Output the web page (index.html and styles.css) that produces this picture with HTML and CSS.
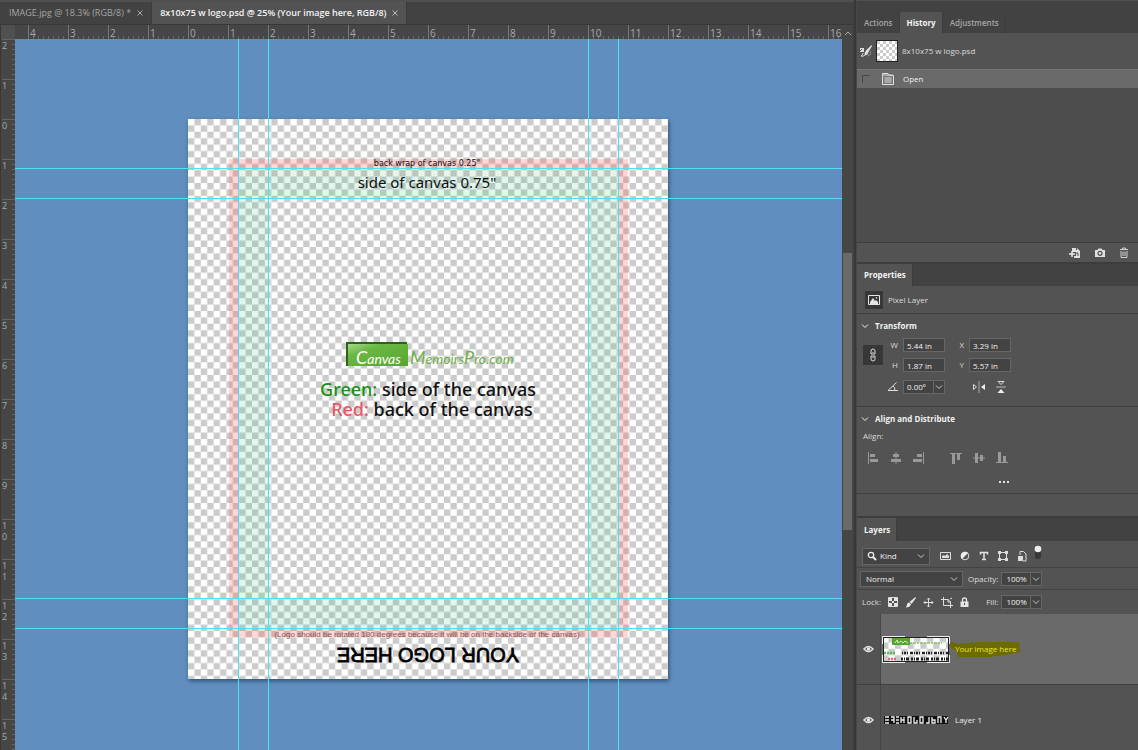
FILE: index.html
```html
<!DOCTYPE html>
<html lang="en">
<head>
<meta charset="utf-8">
<title>8x10x75 w logo.psd</title>
<link rel="stylesheet" href="styles.css">
</head>
<body>
<svg class="defs" aria-hidden="true">
  <symbol id="chev" viewBox="0 0 8 8"><path d="M1 2.500L4 5.500L7 2.500" fill="none" stroke="currentColor"/></symbol>
  <symbol id="eye" viewBox="0 0 12 8"><path d="M1 4Q6-1.500 11 4Q6 9.500 1 4Z" fill="none" stroke="currentColor" stroke-width="1.500"/><circle cx="6" cy="4" r="2" fill="currentColor"/></symbol>
</svg>
<div class="app">
  <main class="workspace">
    <nav class="doc-tabs">
      <button class="doc-tab">IMAGE.jpg @ 18.3% (RGB/8) * <svg class="close" width="6" height="6" viewBox="0 0 6 6"><path d="M.5.5L5.500 5.500M5.500.5L.5 5.500" stroke="#aaa"/></svg></button>
      <button class="doc-tab active">8x10x75 w logo.psd @ 25% (Your image here, RGB/8) <svg class="close" width="6" height="6" viewBox="0 0 6 6"><path d="M.5.5L5.500 5.500M5.500.5L.5 5.500" stroke="#bbb"/></svg></button>
    </nav>
    <div class="view">
      <div class="corner"></div>
      <div class="ruler-x"><span>4</span><span>3</span><span>2</span><span>1</span><span>0</span><span>1</span><span>2</span><span>3</span><span>4</span><span>5</span><span>6</span><span>7</span><span>8</span><span>9</span><span>10</span><span>11</span><span>12</span><span>13</span><span>14</span><span>15</span><span>16</span></div>
      <div class="ruler-y"><span>2</span><span>1</span><span>0</span><span>1</span><span>2</span><span>3</span><span>4</span><span>5</span><span>6</span><span>7</span><span>8</span><span>9</span><span>1<br>0</span><span>1<br>1</span><span>1<br>2</span><span>1<br>3</span><span>1<br>4</span><span>1<br>5</span></div>
      <div class="stage">
        <svg class="artboard" viewBox="0 0 480 560">
          <defs>
            <pattern id="checks" width="16" height="16" patternUnits="userSpaceOnUse" patternTransform="scale(.8)">
              <path d="M0 0H16V16H0Z" fill="#fff"/><path d="M8 0h8v8H8zM0 8h8v8H0z" fill="#cbcbcb"/>
            </pattern>
            <linearGradient id="leaf" x1="0" y1="0" x2="1" y2="1"><stop offset="0" stop-color="#a9d98a"/><stop offset=".3" stop-color="#6ab741"/><stop offset="1" stop-color="#58a632"/></linearGradient>
          </defs>
          <path d="M0 0H480V560H0Z" fill="url(#checks)"/>
          <path d="M41 40H440V518H41ZM50 49V510H431V49Z" fill="#ff4848" fill-opacity=".22" fill-rule="evenodd"/>
          <path d="M50 49H431V510H50ZM80 79V479H400V79Z" fill="#3cbe82" fill-opacity=".14" fill-rule="evenodd"/>
          <text class="wrap-note" x="239" y="47">back wrap of canvas 0.25"</text>
          <text class="side-note" x="239" y="69">side of canvas 0.75"</text>
          <path d="M158 223H219V226H161V247H158Z" fill="#2c6317"/>
          <path d="M160 225H220V247H160Z" fill="url(#leaf)"/>
          <text class="brand" x="168" y="245"><tspan class="brand-cap">C</tspan>anvas</text>
          <text class="brand" x="222" y="245"><tspan class="brand-cap">M</tspan>emoirs<tspan class="brand-cap">P</tspan>ro.com</text>
          <text class="legend" x="240" y="277"><tspan>Green:</tspan> side of the canvas</text>
          <text class="legend" x="244" y="297"><tspan>Red:</tspan> back of the canvas</text>
          <text class="rotate-note" x="239" y="518">(Logo should be rotated 180 degrees because it will be on the backside of the canvas)</text>
          <text class="your-logo" x="-240" y="-529" transform="rotate(180)">YOUR LOGO HERE</text>
        </svg>
        <i class="guide v g1"></i><i class="guide v g2"></i><i class="guide v g3"></i><i class="guide v g4"></i>
        <i class="guide h g5"></i><i class="guide h g6"></i><i class="guide h g7"></i><i class="guide h g8"></i>
      </div>
      <div class="scroll">
        <svg width="8" height="6" viewBox="0 0 8 6"><path d="M1 5L4 2L7 5" fill="none" stroke="#aaa"/></svg>
        <div class="thumb"></div>
      </div>
    </div>
  </main>

  <aside class="panels">
    <section class="history">
      <nav class="tabs first"><button>Actions</button><button class="on">History</button><button>Adjustments</button></nav>
      <div class="snapshot">
        <svg width="12" height="12" viewBox="0 0 12 12"><path d="M11.500 0L6 5.500L4.500 8.500L5 10.500L7.500 9.500L8.500 7L12 1Z" fill="#e0e0e0"/><path d="M0 3H4V7H0Z" fill="#ddd"/><path d="M0 6L2 4" stroke="#535353"/><path d="M5 10Q3 12 1 11Q3 10 3 8" fill="none" stroke="#ddd"/><path d="M8 11L10 10L11 6" fill="none" stroke="#ccc" stroke-dasharray="1 1"/></svg>
        <div class="snap-img"></div><span>8x10x75 w logo.psd</span>
      </div>
      <div class="state"><i class="brush-slot"></i>
        <svg width="12" height="12" viewBox="0 0 12 12"><path d="M.5 2.500V.5H6L7 2.500H11.500V11.500H.5Z" fill="#777" stroke="#ddd"/><path d="M1 2H11M2.500 5H9.500M2.500 7H9.500M2.500 9H9.500" stroke="#ddd"/></svg>
        <span>Open</span></div>
      <div class="history-empty"></div>
      <footer class="history-tools">
        <button aria-label="New document from state"><svg width="12" height="12" viewBox="0 0 12 12"><path d="M3 1H7V3H8V1L11 4V11H5V9H7V5H3Z" fill="#e0e0e0"/><path d="M0 7H6M3 4V10" stroke="#eee" stroke-width="1.500"/><path d="M7 6H9V9" fill="none" stroke="#555"/></svg></button>
        <button aria-label="New snapshot"><svg width="12" height="12" viewBox="0 0 12 12"><path d="M1 3H3.500L4.500 1.500H7.500L8.500 3H11V10H1Z" fill="#e0e0e0"/><circle cx="6" cy="6.300" r="2" fill="#e0e0e0" stroke="#4d4d4d" stroke-width="1.200"/></svg></button>
        <button aria-label="Delete"><svg width="10" height="12" viewBox="0 0 10 12"><path d="M1 2.500H9M3.500 2V1H6.500V2M2 4V10.500H8V4M4 4.500V9M6 4.500V9" fill="none" stroke="#d0d0d0"/></svg></button>
      </footer>
    </section>

    <section class="properties">
      <nav class="tabs"><button class="on">Properties</button></nav>
      <div class="kind-row"><span class="sq"><svg width="12" height="10" viewBox="0 0 12 10"><path d="M.5.5H11.500V9.500H.5Z" fill="none" stroke="#e5e5e5"/><path d="M2 9V7L5 3L7 6L8 5L10 7V9Z" fill="#e5e5e5"/><circle cx="8.500" cy="3" r=".8" fill="#e5e5e5"/></svg></span>Pixel Layer</div>
      <h2><svg width="8" height="8"><use href="#chev"/></svg>Transform</h2>
      <div class="transform">
        <button class="link" aria-label="Link width and height"><svg width="8" height="14" viewBox="0 0 8 14"><path d="M2 6V3Q2 1 4 1Q6 1 6 3V6M2 8V11Q2 13 4 13Q6 13 6 11V8M4 4V10M2 6H3M6 6H5M2 8H3M6 8H5" fill="none" stroke="#ddd"/></svg></button>
        <label for="w">W</label><input id="w" value="5.44 in"><label for="x">X</label><input id="x" value="3.29 in">
        <label for="h">H</label><input id="h" value="1.87 in"><label for="y">Y</label><input id="y" value="5.57 in">
        <label for="a" class="angle" aria-label="Angle"><svg width="12" height="9" viewBox="0 0 12 9"><path d="M9.500.500L1 8.500H11M6 4Q8 5 8 8.500" fill="none" stroke="#ddd"/></svg></label>
        <div class="combo"><input id="a" value="0.00º"><button aria-label="Angle presets"><svg width="8" height="8"><use href="#chev"/></svg></button></div>
        <div class="flips">
          <button aria-label="Flip horizontal"><svg width="14" height="12" viewBox="0 0 14 12"><path d="M1.500 3.500L4.500 6L1.500 8.500Z" fill="none" stroke="#ddd"/><path d="M7 0V12" stroke="#aaa"/><path d="M13 3V9L9 6Z" fill="#eee"/></svg></button>
          <button aria-label="Flip vertical"><svg width="12" height="14" viewBox="0 0 12 14"><path d="M3 1.500H9L6 4.500Z" fill="none" stroke="#ddd"/><path d="M1 7H11" stroke="#bbb"/><path d="M2.500 13H9.500L6 9Z" fill="#eee"/></svg></button>
        </div>
      </div>
      <div class="align">
        <h2><svg width="8" height="8"><use href="#chev"/></svg>Align and Distribute</h2>
        <p>Align:</p>
        <div class="align-icons">
          <button aria-label="Align left edges"><svg width="12" height="12" viewBox="0 0 12 12"><path d="M1.500 0V12" stroke="#999"/><path d="M3 2H8V5H3ZM3 7H11V10H3Z"/></svg></button>
          <button aria-label="Align horizontal centers"><svg width="12" height="12" viewBox="0 0 12 12"><path d="M6 0V12" stroke="#999"/><path d="M3 2H9V5H3ZM1 7H11V10H1Z"/></svg></button>
          <button aria-label="Align right edges"><svg width="12" height="12" viewBox="0 0 12 12"><path d="M10.500 0V12" stroke="#999"/><path d="M4 2H9V5H4ZM0 7H9V10H0Z"/></svg></button>
          <i></i>
          <button aria-label="Align top edges"><svg width="12" height="12" viewBox="0 0 12 12"><path d="M0 1.500H12" stroke="#999"/><path d="M2 2H5V12H2ZM7 2H10V8H7Z"/></svg></button>
          <button aria-label="Align vertical centers"><svg width="12" height="12" viewBox="0 0 12 12"><path d="M0 6H12" stroke="#999"/><path d="M2 1H5V11H2ZM7 3H10V9H7Z"/></svg></button>
          <button aria-label="Align bottom edges"><svg width="12" height="12" viewBox="0 0 12 12"><path d="M0 10.500H12" stroke="#999"/><path d="M2 0H5V10H2ZM7 4H10V10H7Z"/></svg></button>
        </div>
        <button class="more" aria-label="More options"><svg width="12" height="4" viewBox="0 0 12 4"><path d="M1 1H3V3H1ZM5 1H7V3H5ZM9 1H11V3H9Z" fill="#e5e5e5"/></svg></button>
      </div>
    </section>

    <section class="layers">
      <nav class="tabs"><button class="on">Layers</button></nav>
      <div class="filter">
        <div class="drop kind"><svg width="10" height="10" viewBox="0 0 10 10"><circle cx="4" cy="4" r="2.700" fill="none" stroke="#eee" stroke-width="1.300"/><path d="M6 6L9 9" stroke="#eee" stroke-width="2"/></svg><select aria-label="Filter type"><option>Kind</option></select><svg class="arr" width="8" height="8"><use href="#chev"/></svg></div>
        <button aria-label="Pixel layers"><svg width="11" height="10" viewBox="0 0 11 10"><path d="M.5 1.500H10.500V8.500H.5Z" fill="none" stroke="#ddd"/><path d="M2 7V5L4 4L5 5L7 3L9 5V7Z" fill="#ddd"/></svg></button>
        <button aria-label="Adjustment layers"><svg width="10" height="10" viewBox="0 0 10 10"><circle cx="5" cy="5" r="3.800" fill="none" stroke="#ddd"/><path d="M8 2A4.200 4.200 0 0 0 2 8Z" fill="#eee"/></svg></button>
        <button aria-label="Type layers"><svg width="10" height="10" viewBox="0 0 10 10"><path d="M1.500 3.500V1.500H8.500V3.500M5 1.500V8.500M3 8.500H7" fill="none" stroke="#e5e5e5" stroke-width="1.500"/></svg></button>
        <button aria-label="Shape layers"><svg width="10" height="10" viewBox="0 0 10 10"><path d="M1.500 1.500H8.500V8.500H1.500Z" fill="none" stroke="#ddd"/><path d="M0 0H3V3H0ZM7 0H10V3H7ZM0 7H3V10H0ZM7 7H10V10H7Z" fill="#ddd"/></svg></button>
        <button aria-label="Smart objects"><svg width="10" height="11" viewBox="0 0 10 11"><path d="M3 4V.5H6.500L9 3V10H6" fill="none" stroke="#ddd"/><path d="M1 5H6V10H1Z" fill="#ddd"/></svg></button>
        <button class="toggle" aria-label="Filtering on or off"><svg width="8" height="15" viewBox="0 0 8 15"><rect x="1" y="3" width="6" height="11" rx="2" fill="#383838"/><circle cx="4" cy="4" r="3.300" fill="#eee"/></svg></button>
      </div>
      <div class="blend">
        <div class="drop mode"><select aria-label="Blend mode"><option>Normal</option></select><svg class="arr" width="8" height="8"><use href="#chev"/></svg></div>
        <label for="op">Opacity:</label><div class="combo"><input id="op" value="100%"><button aria-label="Opacity slider"><svg width="8" height="8"><use href="#chev"/></svg></button></div>
      </div>
      <div class="lock"><span>Lock:</span>
        <button aria-label="Lock transparency"><svg width="10" height="10" viewBox="0 0 10 10"><path d="M.5.5H9.500V9.500H.5Z" fill="none" stroke="#ddd"/><path d="M1 1H4V4H1ZM6 1H9V4H6ZM4 4H6V6H4ZM1 6H4V9H1ZM6 6H9V9H6Z" fill="#e5e5e5"/></svg></button>
        <button aria-label="Lock image pixels"><svg width="11" height="11" viewBox="0 0 11 11"><path d="M10.500 0L4.500 5L6.500 7L11 1Z" fill="#e5e5e5"/><path d="M4 5.500L6 7.500Q5 10.500 .5 10.500Q2 9.500 2 7.500Q2.500 5.500 4 5.500Z" fill="#eee"/></svg></button>
        <button aria-label="Lock position"><svg width="11" height="11" viewBox="0 0 11 11"><path d="M5.500 1V10M1 5.500H10M4 2.500L5.500 1L7 2.500M4 8.500L5.500 10L7 8.500M2.500 4L1 5.500L2.500 7M8.500 4L10 5.500L8.500 7" fill="none" stroke="#ddd"/></svg></button>
        <button aria-label="Lock artboard nesting"><svg width="12" height="11" viewBox="0 0 12 11"><path d="M0 2.500H7L9.500 5V11M2.500 0V8.500H12M7 2V5H10M9 2L11 1" fill="none" stroke="#ddd"/></svg></button>
        <button aria-label="Lock all"><svg width="9" height="11" viewBox="0 0 9 11"><path d="M2.500 5V3Q2.500 1 4.500 1Q6.500 1 6.500 3V5" fill="none" stroke="#e5e5e5" stroke-width="1.300"/><path d="M.5 4.500H8.500V10H.5Z" fill="#e5e5e5"/><path d="M4.500 6V8" stroke="#555"/></svg></button>
        <label for="fill">Fill:</label><div class="combo"><input id="fill" value="100%"><button aria-label="Fill slider"><svg width="8" height="8"><use href="#chev"/></svg></button></div>
      </div>
      <div class="layer selected">
        <button class="vis" aria-label="Toggle visibility"><svg width="11" height="8"><use href="#eye"/></svg></button>
        <div class="layer-body">
          <svg width="68" height="27" viewBox="0 0 68 27"><path d="M1 1H67V26H1Z" fill="#222"/><path d="M2 2H66V25H2Z" fill="url(#checks)"/><path d="M10 2H28V9H10Z" fill="#55a52e"/><path d="M13 7L15 4L16 7L19 5L21 7L23 5L26 7" fill="none" stroke="#d8efc8"/><path d="M28 7H60" stroke="#8cc070" stroke-width="1.500" stroke-dasharray="2 1 3 1"/><path d="M2 17H14" stroke="#58b858" stroke-width="2.500" stroke-dasharray="2 1"/><path d="M20 17H66" stroke="#222" stroke-width="2.500" stroke-dasharray="1 1 2 1 1 2 3 1"/><path d="M6 23H14" stroke="#e06575" stroke-width="2.500" stroke-dasharray="2 1"/><path d="M19 23H66" stroke="#222" stroke-width="3" stroke-dasharray="2 1 1 1 3 2"/><path d="M.5 8V.5H23M45 .5H67.500V8M67.500 19V26.500H45M23 26.500H.5V19" fill="none" stroke="#eee"/></svg>
          <span class="marked"><svg class="marker" viewBox="0 0 74 20" preserveAspectRatio="none"><path d="M0 3Q4 3 8 5L30 3L71 3L72 13L56 16L40 18H8L7 12L1 9Z" fill="#6d6a00"/></svg><span class="label">Your image here</span></span>
        </div>
      </div>
      <div class="layer">
        <button class="vis" aria-label="Toggle visibility"><svg width="11" height="8"><use href="#eye"/></svg></button>
        <div class="layer-body">
          <svg width="68" height="8" viewBox="0 0 68 8"><path d="M2 0H66V8H2Z" fill="#111"/><path d="M3 1H7M3 4H7M3 7H7M9 1H12V7M9 4H12M14 1H17M14 4H17M14 7H17M19 1V7M22 1V7M19 4H22M26 1H29V7H26ZM32 1V7H35V4M38 1H41V7H38ZM44 7H47V1M50 1V7H53V4H50M56 7V1H59V7M62 1L64 4L66 1M64 4V7" fill="none" stroke="#eee" stroke-width="1.300"/></svg>
          <span class="label">Layer 1</span>
        </div>
      </div>
    </section>
  </aside>
</div>
</body>
</html>
```
FILE: styles.css
```css
* { box-sizing: border-box; }
body { margin: 0; background: #535353; color: #dcdcdc; font: 8px/12px "Open Sans", "Noto Sans", sans-serif; }
button, input, select { font: inherit; color: inherit; margin: 0; padding: 0; border: 0; background: none; border-radius: 0; }
button { display: flex; align-items: center; justify-content: center; flex: none; }
svg { display: block; flex: none; }
.defs { position: absolute; width: 0; height: 0; }
.app { display: grid; grid-template-columns: 1fr 282px; height: 100vh; min-height: 750px; overflow: hidden; }
.workspace { display: flex; flex-direction: column; min-width: 0; border-right: 2px solid #383838; }

.doc-tabs { display: flex; height: 25px; background: #424242; border-top: 2px solid #505050; border-bottom: 1px solid #383838; }
.doc-tab { padding: 0 8px; gap: 6px; color: #a5a5a5; font-size: 9px; font-weight: 500; border-right: 1px solid #3b3b3b; }
.doc-tab:first-child { padding-left: 9px; }
.doc-tab.active { background: #535353; color: #f4f4f4; font-weight: 600; }

.view { flex: 1; min-height: 0; display: grid; grid-template: 14px minmax(0, 1fr) / 15px minmax(0, 1fr) 12px; background: #464646; }
.corner { background: #505050; border-left: 1px solid #383838; }
.ruler-x { display: flex; overflow: hidden; padding-left: 13px; color: #a9a9a9; font-size: 10px; line-height: 16px; }
.ruler-x span {
  flex: 0 0 40px; padding-left: 1px; border-left: 1px solid #777;
  background: repeating-linear-gradient(90deg, transparent 0 4px, #696969 4px 5px) 0 100% / 100% 3px no-repeat;
}
.ruler-y { display: flex; flex-direction: column; overflow: hidden; padding-left: 1px; color: #a9a9a9; font-size: 9px; line-height: 11px; border-left: 1px solid #383838; }
.ruler-y span {
  flex: 0 0 40px; border-top: 1px solid #666;
  background: repeating-linear-gradient(180deg, transparent 0 4px, #666 4px 5px) 100% 0 / 3px 100% no-repeat;
}
.stage { position: relative; overflow: hidden; background: #608ebf; }
.artboard { position: absolute; left: 173px; top: 80px; width: 480px; height: 560px; box-shadow: 1px 2px 4px rgba(20, 40, 70, .6); }
.artboard text { text-anchor: middle; font-family: "Noto Sans", sans-serif; fill: #111; }
.artboard .wrap-note { font: 8px "DejaVu Sans", sans-serif; }
.artboard .side-note { font-size: 15px; }
.artboard .legend { font-size: 18px; font-weight: 500; }
.artboard .legend tspan { fill: #159115; }
.artboard .legend + .legend tspan { fill: #ea5568; }
.artboard .brand { font: italic 14px Lato, sans-serif; text-anchor: start; fill: #fff; }
.artboard .brand + .brand { fill: #6fae4c; }
.brand-cap { font-size: 18px; }
.artboard .rotate-note { font: 8px "Liberation Sans", sans-serif; fill: #8d5555; }
.artboard .your-logo { font: 20px "Liberation Sans", sans-serif; fill: #000; stroke: #000; stroke-width: .8; }
.guide { position: absolute; background: #4fe0f2; }
.guide.v { top: 0; bottom: 0; width: 1px; }
.guide.h { left: 0; right: 0; height: 1px; }
.g1 { left: 223px; } .g2 { left: 253px; } .g3 { left: 573px; } .g4 { left: 603px; }
.g5 { top: 129px; } .g6 { top: 159px; } .g7 { top: 559px; } .g8 { top: 589px; }
.scroll { grid-area: 1 / 3 / 3 / 4; display: flex; flex-direction: column; align-items: center; padding-top: 5px; border-right: 1px solid #404040; }
.thumb { width: 9px; height: 277px; margin-top: 217px; background: #6a6a6a; }

.panels { display: flex; flex-direction: column; min-width: 0; border-left: 1px solid #474747; }
.tabs { display: flex; height: 22px; background: #424242; }
.tabs button { padding: 0 6px 0 7px; color: #a5a5a5; border-right: 1px solid #3c3c3c; font-weight: 600; }
.tabs .on { background: #535353; color: #f4f4f4; font-weight: 700; }
.tabs.first { height: 33px; padding-top: 11px; border-top: 1px solid #505050; }
.history { display: flex; flex-direction: column; height: 264px; border-bottom: 2px solid #3d3d3d; }
.snapshot { display: flex; align-items: center; height: 37px; padding-left: 3px; gap: 4px; border-bottom: 1px solid #757575; }
.snap-img { width: 22px; height: 22px; border: 1px solid #222; background: repeating-conic-gradient(#fff 0 25%, #ccc 0 50%) 0 0 / 6px 6px; }
.state { display: flex; align-items: center; height: 18px; padding-left: 5px; background: #6a6a6a; color: #f0f0f0; }
.brush-slot { width: 8px; height: 8px; margin-right: 12px; border: solid #484848; border-width: 1px 0 0 1px; }
.state span { margin-left: 9px; }
.history-empty { flex: 1; background: #4d4d4d; }
.history-tools { display: flex; justify-content: flex-end; gap: 13px; height: 20px; padding-right: 9px; border-top: 1px solid #3d3d3d; }

.properties { height: 254px; border-bottom: 2px solid #3d3d3d; }
.kind-row { display: flex; align-items: center; gap: 5px; height: 28px; padding-left: 8px; border-bottom: 1px solid #404040; }
.sq { display: grid; place-items: center; width: 18px; height: 18px; background: #373737; }
h2 { display: flex; align-items: center; gap: 6px; margin: 0; padding-left: 4px; height: 24px; font-size: 8px; font-weight: 700; color: #f0f0f0; }
.transform { display: grid; grid-template: 14px 14px 16px / 20px 20px 42px 24px 42px; row-gap: 6px; height: 68px; padding: 0 6px; align-content: start; align-items: center; }
.transform label { justify-self: end; padding-right: 5px; }
.transform input, .combo { border: 1px solid #666; background: #434343; height: 14px; padding-left: 3px; min-width: 0; width: 42px; color: #f0f0f0; }
.link { grid-row: 1 / 3; width: 20px; height: 20px; background: #373737; }
.transform .angle { grid-column: 2; padding-right: 4px; }
.transform .combo { align-self: end; }
.transform .combo input, .combo input { border: 0; width: 26px; height: 12px; padding: 0; background: none; flex: 1; min-width: 0; }
.combo { display: flex; }
.combo button { width: 11px; border-left: 1px solid #666; color: #ccc; }
.flips { grid-column: 4 / 6; align-self: end; display: flex; gap: 9px; padding-left: 27px; }
.align { border-top: 1px solid #404040; border-bottom: 1px solid #404040; height: 88px; }
.align p { margin: 0; padding-left: 6px; line-height: 10px; }
.align-icons { display: flex; gap: 11px; padding: 11px 0 0 10px; fill: #999; }
.align-icons i { width: 3px; }
.more { margin: 16px 0 0 141px; }

.layers { flex: 1; min-height: 0; display: flex; flex-direction: column; }
.layers > * { flex: none; }
.layers .tabs { height: 23px; }
.filter, .blend, .lock { display: flex; align-items: center; border-bottom: 1px solid #434343; padding-left: 5px; }
.filter { height: 27px; padding-top: 4px; gap: 9px; }
.blend { height: 22px; padding-left: 3px; }
.lock { height: 24px; gap: 7px; border: 0; }
.drop { display: flex; align-items: center; border: 1px solid #666; background: #434343; color: #f0f0f0; height: 17px; padding: 0 4px; }
.drop select { flex: 1; min-width: 0; appearance: none; }
.drop .arr { color: #ccc; }
.kind { width: 68px; gap: 3px; }
.filter .kind { margin-right: 1px; }
.toggle { align-self: flex-start; margin-left: -2px; }
.mode { width: 103px; height: 16px; padding-left: 5px; }
.blend label { margin: 0 3px 0 5px; }
.blend .combo, .lock .combo { width: 41px; padding-left: 4px; }
.lock label { margin: 0 -4px 0 10px; }
.layer { display: grid; grid-template-columns: 24px 1fr; height: 71px; border-bottom: 1px solid #404040; }
.vis { color: #e5e5e5; border-right: 1px solid #454545; }
.layer-body { display: flex; align-items: center; padding-left: 1px; }
.selected .layer-body { background: #6a6a6a; }
.label { padding-left: 5px; color: #eee; }
.marked { display: grid; align-items: center; }
.marked > * { grid-area: 1 / 1; }
.marker { width: 72px; height: 20px; }
.marked .label { z-index: 1; color: #e8e820; }
```
